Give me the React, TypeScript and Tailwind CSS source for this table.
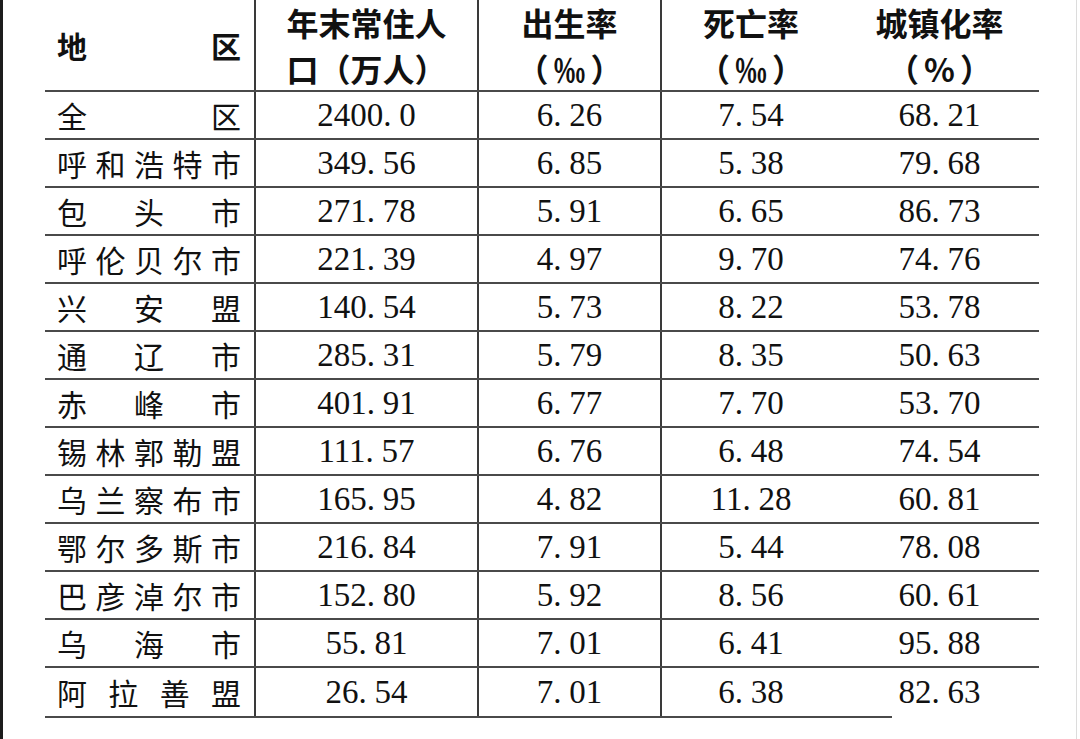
const cjk = "font-['Noto_Sans_CJK_SC',sans-serif]";
const serif = "font-['Liberation_Serif','Noto_Sans_CJK_SC',serif]";

const rows: [string, string, string, string, string][] = [
  ["全区", "2400.0", "6.26", "7.54", "68.21"],
  ["呼和浩特市", "349.56", "6.85", "5.38", "79.68"],
  ["包头市", "271.78", "5.91", "6.65", "86.73"],
  ["呼伦贝尔市", "221.39", "4.97", "9.70", "74.76"],
  ["兴安盟", "140.54", "5.73", "8.22", "53.78"],
  ["通辽市", "285.31", "5.79", "8.35", "50.63"],
  ["赤峰市", "401.91", "6.77", "7.70", "53.70"],
  ["锡林郭勒盟", "111.57", "6.76", "6.48", "74.54"],
  ["乌兰察布市", "165.95", "4.82", "11.28", "60.81"],
  ["鄂尔多斯市", "216.84", "7.91", "5.44", "78.08"],
  ["巴彦淖尔市", "152.80", "5.92", "8.56", "60.61"],
  ["乌海市", "55.81", "7.01", "6.41", "95.88"],
  ["阿拉善盟", "26.54", "7.01", "6.38", "82.63"],
];

const widths = ["w-[209px]", "w-[223px]", "w-[183px]", "w-[180px]", "w-[199px]"];

function Spread({ text, bold }: { text: string; bold?: boolean }) {
  return (
    <div className={`flex justify-between pl-[12px] pr-[13px] ${cjk} text-[30px] leading-none text-[#111] ${bold ? "font-bold" : ""}`}>
      {text.split("").map((c, i) => (
        <span key={i}>{c}</span>
      ))}
    </div>
  );
}

function Num({ v }: { v: string }) {
  const [a, b] = v.split(".");
  return (
    <span className={`${serif} text-[33px] leading-none text-[#111] whitespace-nowrap`}>
      {a}
      <span className="inline-block w-[16px] text-left">.</span>
      {b}
    </span>
  );
}

function Head2({ l1, l2, wide }: { l1: string; l2: string; wide?: boolean }) {
  return (
    <div className={`flex flex-col items-center ${cjk} font-bold text-[32px] leading-[46px] text-[#111]`}>
      <span>{l1}</span>
      <span className={wide ? "tracking-[5px] pl-[5px]" : ""}>{l2}</span>
    </div>
  );
}

export default function App() {
  return (
    <div className="w-[1080px] h-[739px] bg-white flex overflow-hidden">
      <div className="w-[3px] h-full bg-[#1c1c1c]" />
      <div className="ml-[42px] flex flex-col">
        {/* header */}
        <div className="flex h-[92px] border-b-2 border-[#4a4a4a]">
          <div className={`${widths[0]} flex items-center`}>
            <div className="w-full">
              <Spread text="地区" bold />
            </div>
          </div>
          <div className={`${widths[1]} border-l-2 border-[#3a3a3a] flex items-center justify-center`}>
            <Head2 l1="年末常住人" l2="口（万人）" />
          </div>
          <div className={`${widths[2]} border-l-2 border-[#3a3a3a] flex items-center justify-center`}>
            <Head2 l1="出生率" l2="（‰）" wide />
          </div>
          <div className={`${widths[3]} border-l-2 border-[#3a3a3a] flex items-center justify-center`}>
            <Head2 l1="死亡率" l2="（‰）" wide />
          </div>
          <div className={`${widths[4]} flex items-center justify-center`}>
            <Head2 l1="城镇化率" l2="（%）" wide />
          </div>
        </div>
        {rows.map((r, i) => {
          const last = i === rows.length - 1;
          return (
            <div key={r[0]} className={`flex h-[48px] ${last ? "" : "border-b-2 border-[#4a4a4a]"}`}>
              <div className={`${widths[0]} flex items-center`}>
                <div className="w-full">
                  <Spread text={r[0]} />
                </div>
              </div>
              {r.slice(1).map((v, j) => (
                <div
                  key={j}
                  className={`${widths[j + 1]} flex items-center justify-center ${j < 3 ? "border-l-2 border-[#3a3a3a]" : ""}`}
                >
                  <Num v={v} />
                </div>
              ))}
            </div>
          );
        })}
        <div className="w-[847px] h-[2px] bg-[#4a4a4a]" />
      </div>
      <div className="ml-auto mr-[3px] w-[1px] h-full bg-[#dcdcdc]" />
    </div>
  );
}
